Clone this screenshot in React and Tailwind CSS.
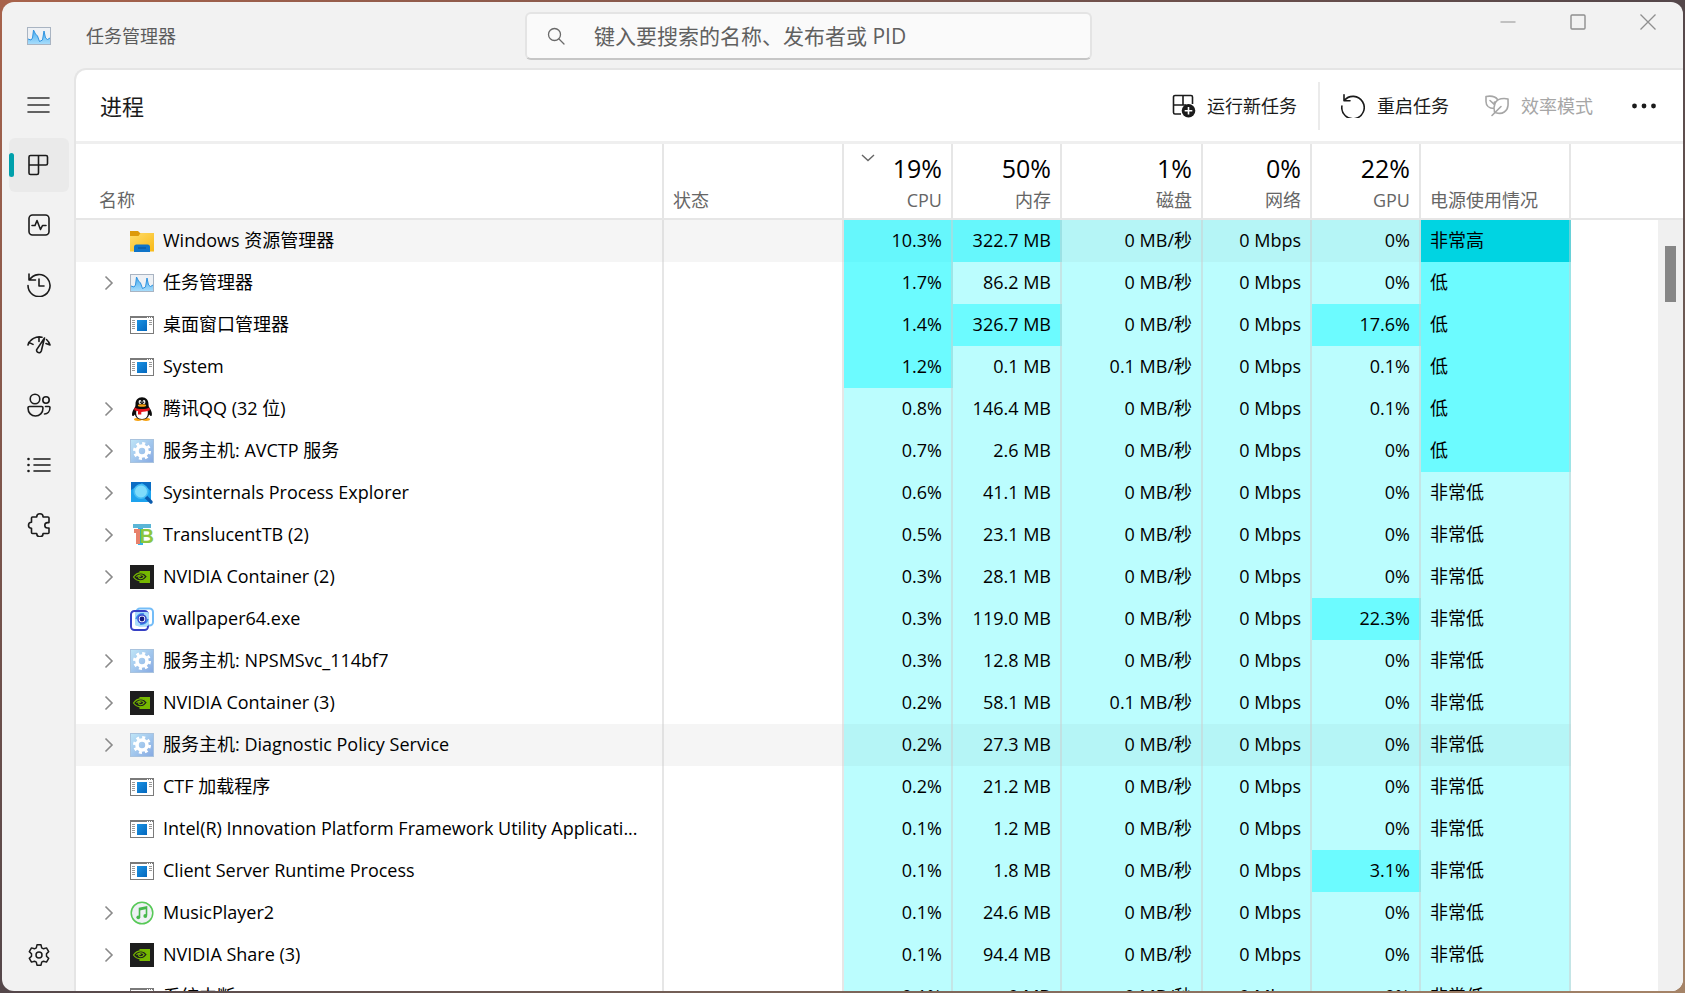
import React from "react";

// Icons of the navigation rail
const MenuIcon = () => (
  <svg className="h-6 w-6" viewBox="0 0 24 24" fill="none" stroke="#333" strokeWidth="1.6" strokeLinecap="round">
    <path d="M1 5h21M1 12h21M1 19h21" />
  </svg>
);

const ProcessesIcon = () => (
  <svg className="h-6 w-6" viewBox="0 0 24 24" fill="none" stroke="#1b1b1b" strokeWidth="1.6" strokeLinejoin="round">
    <path d="M3.500 2.500h15.500a1.500 1.500 0 0 1 1.500 1.500v6.500a1.500 1.500 0 0 1-1.500 1.500H11.500v8a1.500 1.500 0 0 1-1.500 1.500H3.500A1.500 1.500 0 0 1 2 20V4A1.500 1.500 0 0 1 3.500 2.500zM11.500 2.500V12H2" />
  </svg>
);

const PerformanceIcon = () => (
  <svg className="h-6 w-6" viewBox="0 0 24 24" fill="none" stroke="#1b1b1b" strokeWidth="1.6" strokeLinecap="round" strokeLinejoin="round">
    <rect x="2" y="2" width="20" height="20" rx="3.500" />
    <path d="M5 12.500h3l2-5 3.500 9 2-4H19" />
  </svg>
);

const HistoryIcon = () => (
  <svg className="h-6 w-6" viewBox="0 0 24 24" fill="none" stroke="#1b1b1b" strokeWidth="1.6" strokeLinecap="round" strokeLinejoin="round">
    <path d="M2 1v6h6.500M2.500 7A11 11 0 1 1 1 12.500M12 6v7h5" />
  </svg>
);

const StartupIcon = () => (
  <svg className="h-6 w-6" viewBox="0 0 24 24" fill="none" stroke="#1b1b1b" strokeWidth="1.6" strokeLinecap="round" strokeLinejoin="round">
    <path d="M1 12A12 12 0 0 1 15 4.200M19.500 6.500A12 12 0 0 1 23 12M1 12l.8-2.600 4.200 2M12 4v4.500M23 12l-4-1.500M17.500 5l-3.200 13a2.400 2.400 0 0 1-4.600-1.400z" />
  </svg>
);

const UsersIcon = () => (
  <svg className="h-6 w-6" viewBox="0 0 24 24" fill="none" stroke="#1b1b1b" strokeWidth="1.6" strokeLinecap="round" strokeLinejoin="round">
    <circle cx="8" cy="6" r="4.800" />
    <circle cx="19" cy="7" r="3.200" />
    <path d="M2.500 13.500h12a1.500 1.500 0 0 1 1.500 1.500c0 5-3.500 8-7.500 8S1 20 1 15a1.500 1.500 0 0 1 1.500-1.500zM18.500 13.500H22a1 1 0 0 1 1 1c0 4-2.500 6.500-5.500 6.500" />
  </svg>
);

const DetailsIcon = () => (
  <svg className="h-6 w-6" viewBox="0 0 24 24" fill="none" stroke="#1b1b1b" strokeWidth="1.6" strokeLinecap="round">
    <path d="M7 6h16M7 12h16M7 18h16" />
    <path d="M1.500 6h.01M1.500 12h.01M1.500 18h.01" strokeWidth="2.600" />
  </svg>
);

const ServicesIcon = () => (
  <svg className="h-6 w-6" viewBox="0 0 24 24" fill="none" stroke="#1b1b1b" strokeWidth="1.6" strokeLinejoin="round">
    <path d="M5.500 4h4.200a3.200 3.200 0 0 1 6.400 0h4.900a1 1 0 0 1 1 1v4.600h-1.500a2.500 2.500 0 0 0 0 5.400H22v4.500a1 1 0 0 1-1 1h-4.900a3.200 3.200 0 0 1-6.400 0H5.500a1 1 0 0 1-1-1v-4.300a3 3 0 0 1 0-6V5a1 1 0 0 1 1-1z" />
  </svg>
);

const SettingsIcon = () => (
  <svg className="h-6 w-6" viewBox="0 0 24 24" fill="none" stroke="#1b1b1b" strokeWidth="1.5" strokeLinejoin="round">
    <circle cx="12" cy="12" r="3" />
    <path d="M10 1.800h4l.7 3 1.800 1 3-.9 2.200 3.700-2.200 2.100v2.600l2.200 2.100-2.200 3.700-3-.9-1.800 1-.7 3h-4l-.7-3-1.800-1-3 .9-2.200-3.700 2.200-2.100v-2.600L2.300 8.600l2.200-3.700 3 .9 1.800-1z" />
  </svg>
);

// Icons of the process rows
const ChartAppIcon = () => (
  <svg className="h-6 w-6 shrink-0" viewBox="0 0 24 24">
    <defs>
      <linearGradient id="chartFill" x1="0" y1="0" x2="0" y2="1">
        <stop offset="0" stopColor="#4aaef0" />
        <stop offset="1" stopColor="#a6dcfb" />
      </linearGradient>
    </defs>
    <rect x=".5" y="3.500" width="23" height="17" fill="#eef1f5" stroke="#a9b4c2" />
    <path d="M1 15l3 1 1.500-2L6.500 6l2 4 2 2 2 5.500 3-1.500L17 7l1.500 7 2 1.500L23 14v6H1z" fill="url(#chartFill)" />
    <path d="M1 15l3 1 1.500-2L6.500 6l2 4 2 2 2 5.500 3-1.500L17 7l1.500 7 2 1.500L23 14" fill="none" stroke="#2f93e0" strokeWidth="1" />
  </svg>
);

const FolderIcon = () => (
  <svg className="h-6 w-6 shrink-0" viewBox="0 0 24 24">
    <defs>
      <linearGradient id="folderFill" x1="0" y1="0" x2="1" y2="1">
        <stop offset="0" stopColor="#ffdd6b" />
        <stop offset="1" stopColor="#f8b916" />
      </linearGradient>
    </defs>
    <path d="M0 2h8l2 2h14v8H0z" fill="#dd9a0b" />
    <path d="M0 7h8.500l2-3H24v18.500H0z" fill="url(#folderFill)" />
    <path d="M4 23v-5a2.500 2.500 0 0 1 2.500-2.500h11A2.500 2.500 0 0 1 20 18v5z" fill="#0f74c8" />
    <path d="M8 19h8" stroke="#0a4e92" strokeWidth="1" />
  </svg>
);

const WindowIcon = () => (
  <svg className="h-6 w-6 shrink-0" viewBox="0 0 24 24">
    <defs>
      <linearGradient id="windowFill" x1="0" y1="0" x2="1" y2="1">
        <stop offset="0" stopColor="#1a93e4" />
        <stop offset="1" stopColor="#0467bd" />
      </linearGradient>
    </defs>
    <rect x=".5" y="3.500" width="23" height="17" fill="#fff" stroke="#7a7a7a" />
    <path d="M0 4h24" stroke="#7a7a7a" strokeWidth="2" />
    <path d="M17 4.500h5" stroke="#fff" strokeWidth="1" strokeDasharray="1 1" />
    <rect x="7" y="7" width="10" height="11" fill="url(#windowFill)" />
    <path d="M2 7.500h3M2 9.500h3M2 11.500h3M2 13.500h3M2 15.500h3M19 7.500h3M19 9.500h3M19 11.500h3" stroke="#999" />
  </svg>
);

const PenguinIcon = () => (
  <svg className="h-6 w-6 shrink-0" viewBox="0 0 24 24">
    <ellipse cx="8" cy="22.300" rx="4" ry="1.600" fill="#f6a313" />
    <ellipse cx="16" cy="22.300" rx="4" ry="1.600" fill="#f6a313" />
    <path d="M12 .3c4.200 0 6.500 3 6.500 7 0 2 .5 3 1.500 4.500 1.500 2 2.600 5.700 1.500 7.200-.8.5-1.800-.8-2.300-1.500-.7 3-3.200 5-7.200 5s-6.500-2-7.200-5c-.5.7-1.500 2-2.300 1.500-1.100-1.500 0-5.200 1.500-7.200C5 10.300 5.500 9.300 5.500 7.300c0-4 2.300-7 6.500-7z" fill="#0c0c0c" />
    <path d="M6.500 13.500h11c1.200 5-1 8.500-5.500 8.500s-6.700-3.500-5.500-8.500z" fill="#fff" />
    <ellipse cx="10" cy="5" rx="1.400" ry="1.900" fill="#fff" />
    <ellipse cx="14" cy="5" rx="1.400" ry="1.900" fill="#fff" />
    <circle cx="10.400" cy="5.200" r=".7" fill="#111" />
    <circle cx="13.600" cy="5.200" r=".7" fill="#111" />
    <ellipse cx="12" cy="8.500" rx="4.200" ry="1.300" fill="#f6a313" />
    <path d="M4.500 10.500c4 2 11 2 15 0l.3 2.800c-3 1.200-6 1.600-8.500 1.600v2.600H8v-3.200l-3.700-1z" fill="#e6151d" />
  </svg>
);

const GearAppIcon = () => (
  <svg className="h-6 w-6 shrink-0" viewBox="0 0 24 24">
    <defs>
      <linearGradient id="gearFill" x1="0" y1="0" x2="1" y2="1">
        <stop offset="0" stopColor="#bfe6f8" />
        <stop offset="1" stopColor="#86a9e2" />
      </linearGradient>
    </defs>
    <rect x=".5" y=".5" width="23" height="23" fill="url(#gearFill)" stroke="#a9c3de" />
    <circle cx="12" cy="12" r="5" fill="none" stroke="#fff" strokeWidth="3.600" />
    <circle cx="12" cy="12" r="7.600" fill="none" stroke="#fff" strokeWidth="2.800" strokeDasharray="2.980 2.980" />
  </svg>
);

const MagnifierAppIcon = () => (
  <svg className="h-6 w-6 shrink-0" viewBox="0 0 24 24">
    <rect x="1" y="1" width="20" height="20" fill="#1da3ee" />
    <path d="M1 1h20v9L12 2 1 9z" fill="#0a6dc4" />
    <path d="M15 15l6 6" stroke="#0b5cad" strokeWidth="3.400" strokeLinecap="round" />
    <circle cx="11" cy="10.500" r="6.800" fill="#7fdcfb" stroke="#45bdf5" strokeWidth="1.600" />
  </svg>
);

const TranslucentIcon = () => (
  <svg className="h-6 w-6 shrink-0" viewBox="0 0 24 24">
    <rect x="3" y="1" width="18" height="4" fill="#5bb5d6" />
    <rect x="8" y="5" width="5" height="17" fill="#35b3e8" />
    <rect x="4" y="6" width="6" height="4" fill="#e8816b" />
    <rect x="6" y="6" width="4" height="15" fill="#e8816b" />
    <text x="9.500" y="20" fontSize="20" fontWeight="700" fontFamily="Liberation Sans" fill="#8cc63f">B</text>
  </svg>
);

const NvidiaIcon = () => (
  <svg className="h-6 w-6 shrink-0" viewBox="0 0 24 24">
    <rect width="24" height="24" fill="#1e1e1e" />
    <rect x="9.500" y="6" width="10.500" height="12" fill="#76b900" />
    <path d="M3.500 12C5.500 9 8 7.800 11 7.800c3 0 5 1.700 6.300 3.700-1.800 2.800-4 4.300-6.800 4.300S5.300 14.500 3.500 12z" fill="#1e1e1e" stroke="#76b900" strokeWidth="1.200" />
    <path d="M6.500 12c1-1.700 2.500-2.300 4.200-2.300 1.800 0 2.800.9 3.500 1.900-1 1.400-2 2.200-3.500 2.200s-2.300-1-2-2c.3-.8 1.500-1 2.300-.3" fill="none" stroke="#76b900" strokeWidth="1.100" />
  </svg>
);

const WallpaperIcon = () => (
  <svg className="h-6 w-6 shrink-0" viewBox="0 0 24 24" fill="none">
    <rect x="6.500" y="1.500" width="16.500" height="17" rx="3.500" stroke="#74bdf8" strokeWidth="2" />
    <rect x="1" y="4" width="17" height="19" rx="3.500" stroke="#3740c4" strokeWidth="2" />
    <rect x="5" y="5" width="14" height="14" rx="2" fill="#a9dcfb" />
    <path d="M6 12c1.500-4 4-5.500 8-5M18 12c-1.500 4-4 5.500-8 5" stroke="#3b8fe8" strokeWidth="1.600" />
    <circle cx="12" cy="12" r="4" fill="#fff" stroke="#3b4fd0" strokeWidth="1.600" />
    <circle cx="12" cy="12" r="2.400" fill="#141a80" />
  </svg>
);

const MusicIcon = () => (
  <svg className="h-6 w-6 shrink-0" viewBox="0 0 24 24">
    <circle cx="12" cy="12" r="10.800" fill="#eef1f4" stroke="#57c957" strokeWidth="1.500" />
    <path d="M9.500 16V7.500L16.500 6v8.500" fill="none" stroke="#46b84c" strokeWidth="1.600" />
    <path d="M9.500 8.500l7-1.500" stroke="#46b84c" strokeWidth="2" />
    <circle cx="8.300" cy="16.300" r="1.900" fill="#46b84c" />
    <circle cx="15.300" cy="15" r="1.900" fill="#46b84c" />
  </svg>
);

const icons = {
  folder: FolderIcon,
  chart: ChartAppIcon,
  window: WindowIcon,
  penguin: PenguinIcon,
  gear: GearAppIcon,
  magnifier: MagnifierAppIcon,
  translucent: TranslucentIcon,
  nvidia: NvidiaIcon,
  wallpaper: WallpaperIcon,
  music: MusicIcon,
};

const navItems = [
  { label: "进程", icon: ProcessesIcon, active: true },
  { label: "性能", icon: PerformanceIcon },
  { label: "应用历史记录", icon: HistoryIcon },
  { label: "启动应用", icon: StartupIcon },
  { label: "用户", icon: UsersIcon },
  { label: "详细信息", icon: DetailsIcon },
  { label: "服务", icon: ServicesIcon },
];

const usageColumns = [
  { label: "CPU", total: "19%", sorted: true },
  { label: "内存", total: "50%" },
  { label: "磁盘", total: "1%" },
  { label: "网络", total: "0%" },
  { label: "GPU", total: "22%" },
];

// hot lists the indexes of the usage cells with the stronger shade
const processes = [
  { name: "Windows 资源管理器", icon: "folder", usage: ["10.3%", "322.7 MB", "0 MB/秒", "0 Mbps", "0%"], hot: [0, 1], power: "非常高", selected: true },
  { name: "任务管理器", icon: "chart", group: true, usage: ["1.7%", "86.2 MB", "0 MB/秒", "0 Mbps", "0%"], hot: [0], power: "低" },
  { name: "桌面窗口管理器", icon: "window", usage: ["1.4%", "326.7 MB", "0 MB/秒", "0 Mbps", "17.6%"], hot: [0, 1, 4], power: "低" },
  { name: "System", icon: "window", usage: ["1.2%", "0.1 MB", "0.1 MB/秒", "0 Mbps", "0.1%"], hot: [0], power: "低" },
  { name: "腾讯QQ (32 位)", icon: "penguin", group: true, usage: ["0.8%", "146.4 MB", "0 MB/秒", "0 Mbps", "0.1%"], hot: [], power: "低" },
  { name: "服务主机: AVCTP 服务", icon: "gear", group: true, usage: ["0.7%", "2.6 MB", "0 MB/秒", "0 Mbps", "0%"], hot: [], power: "低" },
  { name: "Sysinternals Process Explorer", icon: "magnifier", group: true, usage: ["0.6%", "41.1 MB", "0 MB/秒", "0 Mbps", "0%"], hot: [], power: "非常低" },
  { name: "TranslucentTB (2)", icon: "translucent", group: true, usage: ["0.5%", "23.1 MB", "0 MB/秒", "0 Mbps", "0%"], hot: [], power: "非常低" },
  { name: "NVIDIA Container (2)", icon: "nvidia", group: true, usage: ["0.3%", "28.1 MB", "0 MB/秒", "0 Mbps", "0%"], hot: [], power: "非常低" },
  { name: "wallpaper64.exe", icon: "wallpaper", usage: ["0.3%", "119.0 MB", "0 MB/秒", "0 Mbps", "22.3%"], hot: [4], power: "非常低" },
  { name: "服务主机: NPSMSvc_114bf7", icon: "gear", group: true, usage: ["0.3%", "12.8 MB", "0 MB/秒", "0 Mbps", "0%"], hot: [], power: "非常低" },
  { name: "NVIDIA Container (3)", icon: "nvidia", group: true, usage: ["0.2%", "58.1 MB", "0.1 MB/秒", "0 Mbps", "0%"], hot: [], power: "非常低" },
  { name: "服务主机: Diagnostic Policy Service", icon: "gear", group: true, usage: ["0.2%", "27.3 MB", "0 MB/秒", "0 Mbps", "0%"], hot: [], power: "非常低", selected: true },
  { name: "CTF 加载程序", icon: "window", usage: ["0.2%", "21.2 MB", "0 MB/秒", "0 Mbps", "0%"], hot: [], power: "非常低" },
  { name: "Intel(R) Innovation Platform Framework Utility Applicati...", icon: "window", usage: ["0.1%", "1.2 MB", "0 MB/秒", "0 Mbps", "0%"], hot: [], power: "非常低" },
  { name: "Client Server Runtime Process", icon: "window", usage: ["0.1%", "1.8 MB", "0 MB/秒", "0 Mbps", "3.1%"], hot: [4], power: "非常低" },
  { name: "MusicPlayer2", icon: "music", group: true, usage: ["0.1%", "24.6 MB", "0 MB/秒", "0 Mbps", "0%"], hot: [], power: "非常低" },
  { name: "NVIDIA Share (3)", icon: "nvidia", group: true, usage: ["0.1%", "94.4 MB", "0 MB/秒", "0 Mbps", "0%"], hot: [], power: "非常低" },
  { name: "系统中断", icon: "window", usage: ["0.1%", "0 MB", "0 MB/秒", "0 Mbps", "0%"], hot: [], power: "非常低" },
];

const powerColors = {
  非常高: "bg-[#00d4e2]",
  低: "bg-[#6cfbff]",
  非常低: "bg-[#bbfdfe]",
};

const usageColor = (hot, selected) => {
  if (hot) return selected ? "bg-[#66f7fc]" : "bg-[#6cfbff]";
  return selected ? "bg-[#b5f5f6]" : "bg-[#bbfdfe]";
};

const cellBorder = "border-r-2 border-[#cecece]/50";
const headCell = "border-b-2 border-r-2 border-[#e6e6e6] pb-[6px] align-bottom font-normal";

const TitleBar = () => (
  <header className="flex h-[66px] shrink-0 items-start">
    <div className="flex h-full w-[523px] items-center gap-[35px] pl-[25px] pt-0.5">
      <ChartAppIcon />
      <h1 className="text-[18px] leading-6 text-[#5c5c5c]">任务管理器</h1>
    </div>
    <label className="mt-[10px] flex h-12 max-w-[567px] flex-1 items-center gap-[29px] rounded-md border-2 border-[#e4e4e4] border-b-[#c6c6c6] bg-[#fafafa] pl-5">
      <svg className="h-[18px] w-[18px] shrink-0" viewBox="0 0 18 18" fill="none" stroke="#6a6a6a" strokeWidth="1.300" strokeLinecap="round">
        <circle cx="7.500" cy="7.500" r="6" />
        <path d="M12 12l5 5" />
      </svg>
      <input
        type="text"
        aria-label="搜索"
        placeholder="键入要搜索的名称、发布者或 PID"
        className="min-w-0 flex-1 bg-transparent text-[21px] leading-7 outline-none placeholder:text-[#606060]"
      />
    </label>
    <div className="ml-auto flex">
      <button aria-label="最小化" className="flex h-10 w-[70px] items-center justify-center">
        <svg className="h-4 w-4" viewBox="0 0 16 16" stroke="#8f8f8f" strokeWidth="1.200">
          <path d="M.5 8h15" />
        </svg>
      </button>
      <button aria-label="最大化" className="flex h-10 w-[70px] items-center justify-center">
        <svg className="h-4 w-4" viewBox="0 0 16 16" fill="none" stroke="#8f8f8f" strokeWidth="1.400">
          <rect x="1" y="1" width="14" height="14" rx="1" />
        </svg>
      </button>
      <button aria-label="关闭" className="flex h-10 w-[70px] items-center justify-center">
        <svg className="h-4 w-4" viewBox="0 0 16 16" stroke="#8f8f8f" strokeWidth="1.300">
          <path d="M.5.5l15 15M15.500.5l-15 15" />
        </svg>
      </button>
    </div>
  </header>
);

const Sidebar = () => (
  <nav className="flex w-[72px] shrink-0 flex-col gap-1.5 px-[7px] pb-[9px] pt-[10px]">
    <button aria-label="导航" className="flex h-[54px] items-center pl-[18px]">
      <MenuIcon />
    </button>
    {navItems.map(({ label, icon: Icon, active }) => (
      <button
        key={label}
        aria-label={label}
        className={`flex h-[54px] w-[60px] items-center rounded-md ${active ? "bg-[#eaeaea]" : ""}`}
      >
        <span className={`h-6 w-[5px] rounded-full ${active ? "bg-[#00a0ab]" : ""}`} />
        <span className="pl-[13px]">
          <Icon />
        </span>
      </button>
    ))}
    <button aria-label="设置" className="mt-auto flex h-[54px] items-center pl-[18px]">
      <SettingsIcon />
    </button>
  </nav>
);

const Toolbar = () => (
  <div className="flex h-[74px] shrink-0 items-center border-b-[3px] border-[#efefef] pl-6 pr-[27px]">
    <h2 className="text-[22px] font-normal leading-8 text-[#1b1b1b]">进程</h2>
    <div className="ml-auto flex items-center text-[18px] leading-6 text-[#1b1b1b]">
      <button className="flex items-center gap-[11px]">
        <svg className="h-6 w-6" viewBox="0 0 24 24" fill="none" stroke="#1b1b1b" strokeWidth="1.600">
          <path d="M20.500 10V3a1.500 1.500 0 0 0-1.500-1.500H3A1.500 1.500 0 0 0 1.500 3v15.500A1.500 1.500 0 0 0 3 20h6M11 1.500V11H1.500M11 11h3" />
          <circle cx="16.500" cy="16.800" r="6.800" fill="#1b1b1b" stroke="none" />
          <path d="M16.500 13v7.600M12.700 16.800h7.600" stroke="#fff" />
        </svg>
        运行新任务
      </button>
      <span className="mx-[21px] h-12 w-0.5 bg-[#ebebeb]" />
      <button className="flex items-center gap-3">
        <svg className="h-6 w-6" viewBox="0 0 24 24" fill="none" stroke="#1b1b1b" strokeWidth="1.600" strokeLinecap="round" strokeLinejoin="round">
          <path d="M3 .8v6h6M3.300 6.500A11.200 11.200 0 1 1 .9 12" />
        </svg>
        重启任务
      </button>
      <button disabled className="ml-9 flex items-center gap-3 text-[#a6a6a6]">
        <svg className="h-6 w-6" viewBox="0 0 24 24" fill="none" stroke="#a6a6a6" strokeWidth="1.600" strokeLinecap="round" strokeLinejoin="round">
          <path d="M9 14.500C4 14.500 1 11.500 1 7.500v-5c5-.8 9-.8 11.500 3M5 6.500l4.500 4.200V8M7 21.500l9-9M9.500 18C8 12 10 6 16 4.800c2.500-.4 5-.3 7 .2 0 2 .2 4 0 6.500-.5 5.500-5.500 9.500-12 7.200" />
        </svg>
        效率模式
      </button>
      <button aria-label="更多选项" className="ml-[39px]">
        <svg className="h-6 w-6" viewBox="0 0 24 24" fill="#1b1b1b">
          <circle cx="2.500" cy="12" r="2.400" />
          <circle cx="12" cy="12" r="2.400" />
          <circle cx="21.500" cy="12" r="2.400" />
        </svg>
      </button>
    </div>
  </div>
);

const ProcessTable = () => (
  <div className="relative min-h-0 flex-1 overflow-hidden">
    <table className="w-full table-fixed border-separate border-spacing-0 text-[18px] leading-6 text-black">
      <colgroup>
        <col className="w-[588px]" />
        <col className="w-[180px]" />
        <col className="w-[109px]" />
        <col className="w-[109px]" />
        <col className="w-[141px]" />
        <col className="w-[109px]" />
        <col className="w-[109px]" />
        <col className="w-[150px]" />
        <col />
      </colgroup>
      <thead>
        <tr className="h-[76px] text-[#666]">
          <th className={`pl-[23px] text-left ${headCell}`}>名称</th>
          <th className={`pl-[9px] text-left ${headCell}`}>状态</th>
          {usageColumns.map((column) => (
            <th key={column.label} className={`pr-[9px] text-right ${headCell}`}>
              <div className="flex items-start justify-end">
                {column.sorted && (
                  <svg className="ml-4 mr-auto mt-1 h-3 w-4" viewBox="0 0 16 12" fill="none" stroke="#666" strokeWidth="1.400">
                    <path d="M2 3l6 5.500L14 3" />
                  </svg>
                )}
                <span className="text-[25px] leading-10 text-black">{column.total}</span>
              </div>
              <div>{column.label}</div>
            </th>
          ))}
          <th className={`pl-[9px] text-left ${headCell}`}>电源使用情况</th>
          <td className="border-b-2 border-[#e6e6e6]" />
        </tr>
      </thead>
      <tbody>
        {processes.map((process) => {
          const Icon = icons[process.icon];
          const rowColor = process.selected ? "bg-[#f5f5f5]" : "bg-white";
          return (
            <tr key={process.name} className="h-[42px]">
              <td className={`py-0 pl-[27px] pr-1 ${cellBorder} ${rowColor}`}>
                <div className="flex items-center">
                  <span className="flex w-[27px] shrink-0">
                    {process.group && (
                      <svg className="h-4 w-3" viewBox="0 0 12 16" fill="none" stroke="#8a8a8a" strokeWidth="1.600">
                        <path d="M2.500 1.500L9 8l-6.500 6.500" />
                      </svg>
                    )}
                  </span>
                  <Icon />
                  <span className="ml-[9px] truncate pb-0.5">{process.name}</span>
                </div>
              </td>
              <td className={`${cellBorder} ${rowColor}`} />
              {process.usage.map((value, i) => (
                <td
                  key={i}
                  className={`whitespace-nowrap pb-0.5 pr-[9px] pt-0 text-right ${cellBorder} ${usageColor(process.hot.includes(i), process.selected)}`}
                >
                  {value}
                </td>
              ))}
              <td
                className={`pb-0.5 pl-[9px] pt-0 ${cellBorder} ${
                  process.selected && process.power === "非常低" ? "bg-[#b5f5f6]" : powerColors[process.power]
                }`}
              >
                {process.power}
              </td>
              <td />
            </tr>
          );
        })}
      </tbody>
    </table>

    {/* Scrollbar over the last column */}
    <div className="absolute bottom-0 right-0 top-[76px] w-[25px] bg-[#f0f0f0] pt-[26px]">
      <div className="mx-auto h-14 w-[11px] bg-[#868686]" />
    </div>
  </div>
);

const App = () => {
  return (
    <div className="h-screen overflow-hidden bg-linear-to-br from-[#a8634b] via-[#54474a] to-[#a58468] p-0.5 font-['Open_Sans','Noto_Sans_CJK_SC',sans-serif]">
      <div className="flex h-full flex-col overflow-hidden rounded-xl bg-[#f2f2f2]">
        <TitleBar />
        <div className="flex min-h-0 flex-1">
          <Sidebar />
          <main className="flex min-w-0 flex-1 flex-col overflow-hidden rounded-tl-xl border-l-2 border-t-2 border-[#e5e5e5] bg-white">
            <Toolbar />
            <ProcessTable />
          </main>
        </div>
      </div>
    </div>
  );
};

export default App;
